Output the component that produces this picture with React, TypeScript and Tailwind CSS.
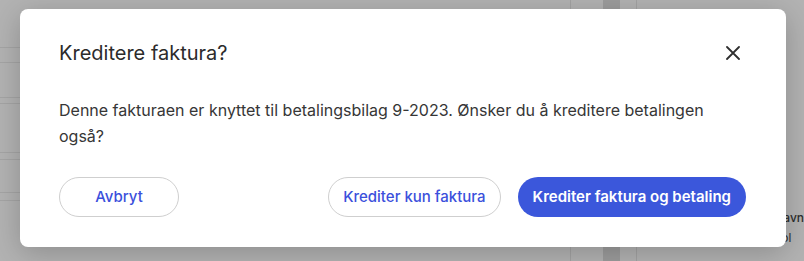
import React from 'react'

const font = { fontFamily: 'Inter, "Noto Sans", sans-serif' }

// the page behind the overlay, only its faint edges show
function Backdrop() {
  return (
    <div className="absolute inset-0 flex bg-[#b3b3b3]">
      <div className="flex w-[30px] flex-col">
        <div className="h-[48px] border-b border-[#a5a5a5]" />
        <div className="h-[15px] border-b border-[#a5a5a5]" />
        <div className="h-[35px] border-b border-[#a5a5a5]" />
        <div className="h-[6px] border-b border-[#a5a5a5]" />
        <div className="h-[49px] border-b border-[#a5a5a5]" />
        <div className="h-[7px] border-b border-[#a5a5a5]" />
        <div className="h-[33px] border-b border-[#a5a5a5]" />
        <div className="h-[8px] border-b border-[#a5a5a5]" />
      </div>
      <div className="w-[542px]" />
      <div className="w-px bg-[#a3a3a3]" />
      <div className="w-[32px]" />
      <div className="w-[17px] bg-[#9d9d9d]" />
      <div className="w-[16px]" />
      <div className="w-px bg-[#a3a3a3]" />
      <div className="flex flex-1 flex-col pl-[146px] pt-[208px] text-[12px] leading-[20px] text-[#2e2e2e]" style={font}>
        <span className="font-medium">avn</span>
        <span className="-ml-[2px]">ol</span>
      </div>
    </div>
  )
}

function CloseIcon() {
  return (
    <svg width="14" height="14" viewBox="0 0 14 14" fill="none">
      <path d="M1 1L13 13M13 1L1 13" stroke="#2f2f2f" strokeWidth="1.8" strokeLinecap="round" />
    </svg>
  )
}

function CreditDialog() {
  return (
    <div
      className="absolute left-[20px] top-[9px] flex w-[766px] flex-col rounded-lg bg-white pl-[39px] pr-[40px] pt-[30px] pb-[30px] shadow-[0_6px_30px_rgba(0,0,0,0.22)]"
      style={font}
    >
      <div className="flex h-[28px] items-center justify-between">
        <h2 className="text-[20px] leading-[28px] font-normal text-[#2b2b2b]">Kreditere faktura?</h2>
        <button className="-mr-[1px] flex h-[28px] w-[28px] items-center justify-center">
          <CloseIcon />
        </button>
      </div>

      <p className="mt-[30px] text-[16px] leading-[26px] text-[#363636]">
        Denne fakturaen er knyttet til betalingsbilag 9-2023. Ønsker du å kreditere betalingen også?
      </p>

      <div className="mt-[28px] flex items-center justify-between">
        <button className="h-[40px] min-w-[120px] rounded-full border border-[#cfcfcf] px-4 text-[15px] font-medium text-[#3b50dc]">
          Avbryt
        </button>
        <div className="flex items-center gap-[17px]">
          <button className="h-[40px] rounded-full border border-[#cfcfcf] px-[14px] text-[15px] font-medium text-[#3b50dc]">
            Krediter kun faktura
          </button>
          <button className="h-[40px] rounded-full bg-[#3b57db] px-[15px] text-[15px] font-semibold text-white">
            Krediter faktura og betaling
          </button>
        </div>
      </div>
    </div>
  )
}

export default function App() {
  return (
    <div className="relative h-[261px] w-[804px] overflow-hidden">
      <Backdrop />
      <CreditDialog />
    </div>
  )
}
